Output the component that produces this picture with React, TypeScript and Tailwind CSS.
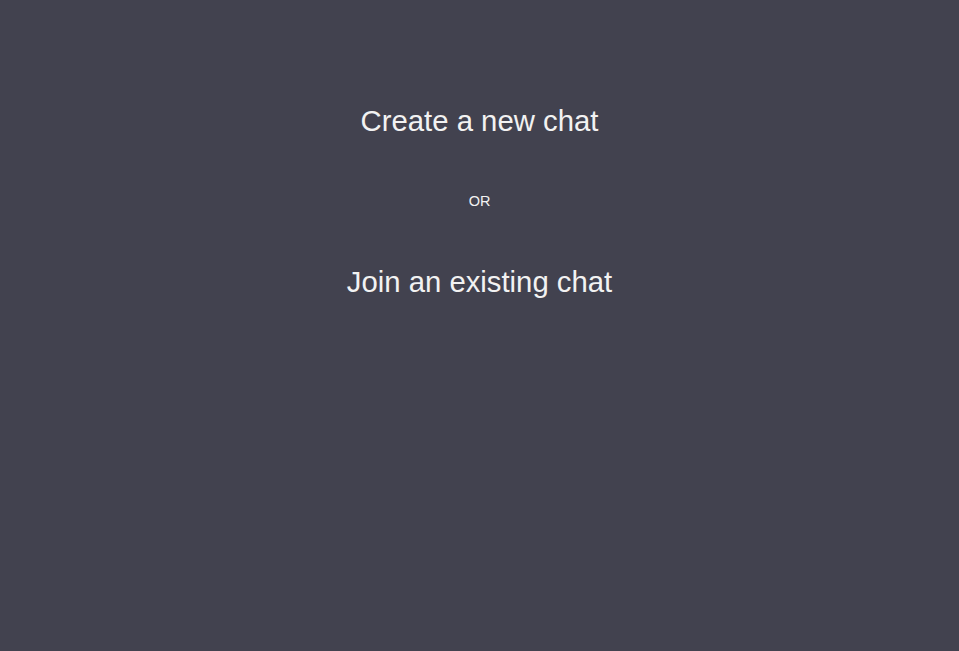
export default function App() {
  return (
    <div className="min-h-[651px] w-full bg-[#42424f] text-[#f2f2f2] flex flex-col items-center" style={{ fontFamily: '"Liberation Sans", Arial, sans-serif' }}>
      <button className="mt-[103px] text-[29.3px] leading-[36px] text-[#f2f2f2]">Create a new chat</button>
      <div className="mt-[54px] text-[14.5px] leading-[16px]">OR</div>
      <button className="mt-[55px] text-[29.3px] leading-[36px] text-[#f2f2f2]">Join an existing chat</button>
    </div>
  );
}
